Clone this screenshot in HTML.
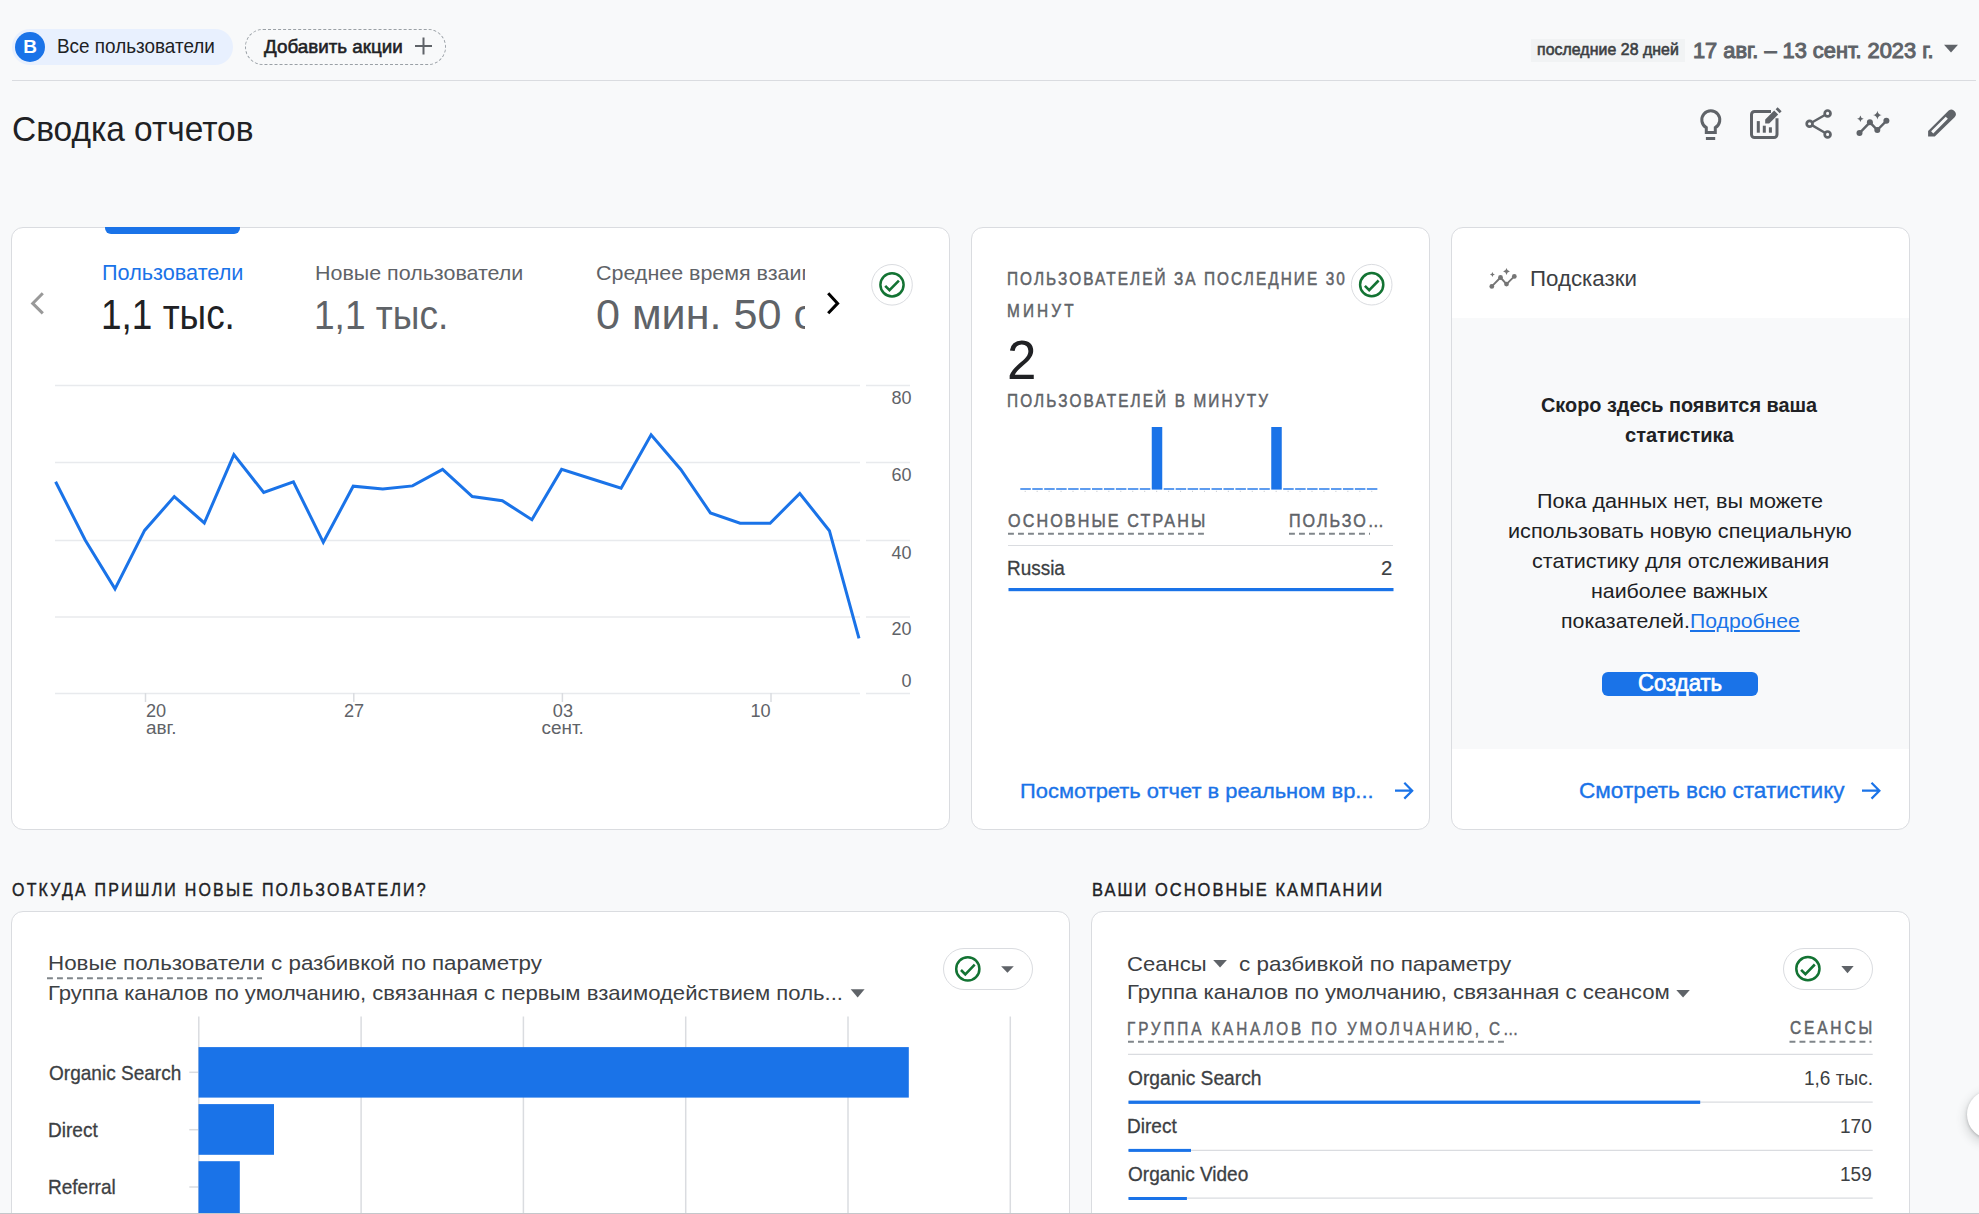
<!DOCTYPE html>
<html><head><meta charset="utf-8"><style>
html,body{margin:0;padding:0;}
body{width:1979px;height:1214px;overflow:hidden;background:#f8f9fa;position:relative;font-family:"Liberation Sans",sans-serif;}
.t{position:absolute;white-space:nowrap;line-height:normal;}
.b{position:absolute;box-sizing:border-box;}
svg{position:absolute;left:0;top:0;}
</style></head><body>
<div class="b" style="left:12px;top:29px;width:221px;height:36px;border-radius:18px;background:#e8f0fe"></div>
<div class="b" style="left:15px;top:31.8px;width:30px;height:30px;border-radius:15px;background:#1a73e8;color:#fff;font-weight:700;font-size:19px;line-height:30px;text-align:center;font-family:'Liberation Sans',sans-serif">B</div>
<div class="b" style="left:245px;top:29px;width:201px;height:36px;border-radius:18px;border:1.3px dashed #9aa0a6"></div>
<div class="b" style="left:1531px;top:38.5px;width:154px;height:23.5px;background:#f1f3f4"></div>
<div class="b" style="left:12px;top:80px;width:1964px;height:1px;background:#dadce0"></div>
<div class="b" style="left:11px;top:227px;width:939px;height:603px;border:1px solid #dadce0;border-radius:12px;background:#fff"></div>
<div class="b" style="left:104.8px;top:227px;width:135px;height:7px;background:#1a73e8;border-radius:0 0 6px 6px"></div>
<div class="b" style="left:971px;top:227px;width:459px;height:603px;border:1px solid #dadce0;border-radius:12px;background:#fff"></div>
<div class="b" style="left:1451px;top:227px;width:459px;height:603px;border:1px solid #dadce0;border-radius:12px;background:#fff;overflow:hidden"><div style="position:absolute;left:0;top:90px;width:100%;height:431px;background:#f8f9fa"></div></div>
<div class="b" style="left:1602px;top:671.8px;width:156.2px;height:24.2px;border-radius:6px;background:#1a73e8"></div>
<div class="b" style="left:11px;top:911px;width:1059px;height:400px;border:1px solid #dadce0;border-radius:12px;background:#fff"></div>
<div class="b" style="left:1091px;top:911px;width:819px;height:400px;border:1px solid #dadce0;border-radius:12px;background:#fff"></div>
<div class="b" style="left:1967px;top:1090px;width:49px;height:49px;border-radius:50%;background:#fff;box-shadow:0 1px 3px rgba(60,64,67,.3),0 4px 8px 3px rgba(60,64,67,.15)"></div>
<svg width="1979" height="1214" viewBox="0 0 1979 1214">
<line x1="55" y1="385.5" x2="860" y2="385.5" stroke="#e8eaed" stroke-width="1.5"/>
<line x1="866" y1="385.5" x2="910" y2="385.5" stroke="#e8eaed" stroke-width="1.5"/>
<line x1="55" y1="462.5" x2="860" y2="462.5" stroke="#e8eaed" stroke-width="1.5"/>
<line x1="866" y1="462.5" x2="910" y2="462.5" stroke="#e8eaed" stroke-width="1.5"/>
<line x1="55" y1="540.5" x2="860" y2="540.5" stroke="#e8eaed" stroke-width="1.5"/>
<line x1="866" y1="540.5" x2="910" y2="540.5" stroke="#e8eaed" stroke-width="1.5"/>
<line x1="55" y1="617" x2="860" y2="617" stroke="#e8eaed" stroke-width="1.5"/>
<line x1="866" y1="617" x2="910" y2="617" stroke="#e8eaed" stroke-width="1.5"/>
<line x1="55" y1="693.5" x2="860" y2="693.5" stroke="#e8eaed" stroke-width="1.5"/>
<line x1="866" y1="693.5" x2="910" y2="693.5" stroke="#e8eaed" stroke-width="1.5"/>
<line x1="145.5" y1="693" x2="145.5" y2="702" stroke="#dadce0" stroke-width="1.5"/>
<line x1="353.8" y1="693" x2="353.8" y2="702" stroke="#dadce0" stroke-width="1.5"/>
<line x1="562.4" y1="693" x2="562.4" y2="702" stroke="#dadce0" stroke-width="1.5"/>
<line x1="771" y1="693" x2="771" y2="702" stroke="#dadce0" stroke-width="1.5"/>
<polyline fill="none" stroke="#1a73e8" stroke-width="3" stroke-linejoin="miter" points="55.6,481.8 85.3,540.3 115,588.9 144.6,530.4 174.3,496.6 204.3,523 233.9,454.6 263.7,492.5 293.4,481.8 323.3,542.3 353.2,486.2 382.8,488.9 412.5,485.9 442.6,469.4 472.3,496.6 502.3,500.7 531.9,519.7 561.6,469.4 591.3,478.8 621.1,488.2 651.1,434.8 680.8,469.4 710.4,512.9 740.1,523.2 770.1,523.2 799.8,493.5 829.4,530.7 859,638.4"/>
<rect x="1020.30" y="488.3" width="10.5" height="1.4" fill="#1a73e8"/>
<rect x="1024.70" y="490.8" width="1" height="1" fill="#bdc1c6"/>
<rect x="1032.25" y="488.3" width="10.5" height="1.4" fill="#1a73e8"/>
<rect x="1036.65" y="490.8" width="1" height="1" fill="#bdc1c6"/>
<rect x="1044.20" y="488.3" width="10.5" height="1.4" fill="#1a73e8"/>
<rect x="1048.60" y="490.8" width="1" height="1" fill="#bdc1c6"/>
<rect x="1056.15" y="488.3" width="10.5" height="1.4" fill="#1a73e8"/>
<rect x="1060.55" y="490.8" width="1" height="1" fill="#bdc1c6"/>
<rect x="1068.10" y="488.3" width="10.5" height="1.4" fill="#1a73e8"/>
<rect x="1072.50" y="490.8" width="1" height="1" fill="#bdc1c6"/>
<rect x="1080.05" y="488.3" width="10.5" height="1.4" fill="#1a73e8"/>
<rect x="1084.45" y="490.8" width="1" height="1" fill="#bdc1c6"/>
<rect x="1092.00" y="488.3" width="10.5" height="1.4" fill="#1a73e8"/>
<rect x="1096.40" y="490.8" width="1" height="1" fill="#bdc1c6"/>
<rect x="1103.95" y="488.3" width="10.5" height="1.4" fill="#1a73e8"/>
<rect x="1108.35" y="490.8" width="1" height="1" fill="#bdc1c6"/>
<rect x="1115.90" y="488.3" width="10.5" height="1.4" fill="#1a73e8"/>
<rect x="1120.30" y="490.8" width="1" height="1" fill="#bdc1c6"/>
<rect x="1127.85" y="488.3" width="10.5" height="1.4" fill="#1a73e8"/>
<rect x="1132.25" y="490.8" width="1" height="1" fill="#bdc1c6"/>
<rect x="1139.80" y="488.3" width="10.5" height="1.4" fill="#1a73e8"/>
<rect x="1144.20" y="490.8" width="1" height="1" fill="#bdc1c6"/>
<rect x="1151.75" y="427" width="10.5" height="62.6" fill="#1a73e8"/>
<rect x="1156.15" y="490.8" width="1" height="1" fill="#bdc1c6"/>
<rect x="1163.70" y="488.3" width="10.5" height="1.4" fill="#1a73e8"/>
<rect x="1168.10" y="490.8" width="1" height="1" fill="#bdc1c6"/>
<rect x="1175.65" y="488.3" width="10.5" height="1.4" fill="#1a73e8"/>
<rect x="1180.05" y="490.8" width="1" height="1" fill="#bdc1c6"/>
<rect x="1187.60" y="488.3" width="10.5" height="1.4" fill="#1a73e8"/>
<rect x="1192.00" y="490.8" width="1" height="1" fill="#bdc1c6"/>
<rect x="1199.55" y="488.3" width="10.5" height="1.4" fill="#1a73e8"/>
<rect x="1203.95" y="490.8" width="1" height="1" fill="#bdc1c6"/>
<rect x="1211.50" y="488.3" width="10.5" height="1.4" fill="#1a73e8"/>
<rect x="1215.90" y="490.8" width="1" height="1" fill="#bdc1c6"/>
<rect x="1223.45" y="488.3" width="10.5" height="1.4" fill="#1a73e8"/>
<rect x="1227.85" y="490.8" width="1" height="1" fill="#bdc1c6"/>
<rect x="1235.40" y="488.3" width="10.5" height="1.4" fill="#1a73e8"/>
<rect x="1239.80" y="490.8" width="1" height="1" fill="#bdc1c6"/>
<rect x="1247.35" y="488.3" width="10.5" height="1.4" fill="#1a73e8"/>
<rect x="1251.75" y="490.8" width="1" height="1" fill="#bdc1c6"/>
<rect x="1259.30" y="488.3" width="10.5" height="1.4" fill="#1a73e8"/>
<rect x="1263.70" y="490.8" width="1" height="1" fill="#bdc1c6"/>
<rect x="1271.25" y="427" width="10.5" height="62.6" fill="#1a73e8"/>
<rect x="1275.65" y="490.8" width="1" height="1" fill="#bdc1c6"/>
<rect x="1283.20" y="488.3" width="10.5" height="1.4" fill="#1a73e8"/>
<rect x="1287.60" y="490.8" width="1" height="1" fill="#bdc1c6"/>
<rect x="1295.15" y="488.3" width="10.5" height="1.4" fill="#1a73e8"/>
<rect x="1299.55" y="490.8" width="1" height="1" fill="#bdc1c6"/>
<rect x="1307.10" y="488.3" width="10.5" height="1.4" fill="#1a73e8"/>
<rect x="1311.50" y="490.8" width="1" height="1" fill="#bdc1c6"/>
<rect x="1319.05" y="488.3" width="10.5" height="1.4" fill="#1a73e8"/>
<rect x="1323.45" y="490.8" width="1" height="1" fill="#bdc1c6"/>
<rect x="1331.00" y="488.3" width="10.5" height="1.4" fill="#1a73e8"/>
<rect x="1335.40" y="490.8" width="1" height="1" fill="#bdc1c6"/>
<rect x="1342.95" y="488.3" width="10.5" height="1.4" fill="#1a73e8"/>
<rect x="1347.35" y="490.8" width="1" height="1" fill="#bdc1c6"/>
<rect x="1354.90" y="488.3" width="10.5" height="1.4" fill="#1a73e8"/>
<rect x="1359.30" y="490.8" width="1" height="1" fill="#bdc1c6"/>
<rect x="1366.85" y="488.3" width="10.5" height="1.4" fill="#1a73e8"/>
<rect x="1371.25" y="490.8" width="1" height="1" fill="#bdc1c6"/>
<line x1="1008" y1="533.8" x2="1206" y2="533.8" stroke="#80868b" stroke-width="1.9" stroke-dasharray="5.9 4.1"/>
<line x1="1289" y1="533.8" x2="1370" y2="533.8" stroke="#80868b" stroke-width="1.9" stroke-dasharray="5.9 4.1"/>
<line x1="1008" y1="545.5" x2="1393" y2="545.5" stroke="#dadce0" stroke-width="1.2"/>
<rect x="1008.5" y="588" width="385" height="3.2" fill="#1a73e8"/>
<line x1="198.8" y1="1016.5" x2="198.8" y2="1214" stroke="#dadce0" stroke-width="1.5"/>
<line x1="361.1" y1="1016.5" x2="361.1" y2="1214" stroke="#dadce0" stroke-width="1.5"/>
<line x1="523.4" y1="1016.5" x2="523.4" y2="1214" stroke="#dadce0" stroke-width="1.5"/>
<line x1="685.7" y1="1016.5" x2="685.7" y2="1214" stroke="#dadce0" stroke-width="1.5"/>
<line x1="848.0" y1="1016.5" x2="848.0" y2="1214" stroke="#dadce0" stroke-width="1.5"/>
<line x1="1010.3" y1="1016.5" x2="1010.3" y2="1214" stroke="#dadce0" stroke-width="1.5"/>
<rect x="198.5" y="1047.1" width="710.3" height="50.5" fill="#1a73e8"/>
<rect x="198.5" y="1104.1" width="75.5" height="50.7" fill="#1a73e8"/>
<rect x="198.5" y="1161.2" width="41.3" height="60" fill="#1a73e8"/>
<line x1="189.3" y1="1072.3" x2="198" y2="1072.3" stroke="#dadce0" stroke-width="1.5"/>
<line x1="189.3" y1="1129.7" x2="198" y2="1129.7" stroke="#dadce0" stroke-width="1.5"/>
<line x1="189.3" y1="1187" x2="198" y2="1187" stroke="#dadce0" stroke-width="1.5"/>
<line x1="47" y1="978.3" x2="262" y2="978.3" stroke="#80868b" stroke-width="1.9" stroke-dasharray="5.9 4.1"/>
<line x1="1128" y1="1041.8" x2="1506" y2="1041.8" stroke="#80868b" stroke-width="1.9" stroke-dasharray="5.9 4.1"/>
<line x1="1789.5" y1="1041.8" x2="1871.5" y2="1041.8" stroke="#80868b" stroke-width="1.9" stroke-dasharray="5.9 4.1"/>
<line x1="1128" y1="1054.4" x2="1872.7" y2="1054.4" stroke="#dadce0" stroke-width="1.3"/>
<line x1="1128" y1="1102.2" x2="1872.7" y2="1102.2" stroke="#dadce0" stroke-width="1.3"/>
<line x1="1128" y1="1150.4" x2="1872.7" y2="1150.4" stroke="#dadce0" stroke-width="1.3"/>
<line x1="1128" y1="1198.1" x2="1872.7" y2="1198.1" stroke="#dadce0" stroke-width="1.3"/>
<rect x="1128.5" y="1100.6" width="571.7" height="3.3" fill="#1a73e8"/>
<rect x="1128.5" y="1148.9" width="62.5" height="3" fill="#1a73e8"/>
<rect x="1128.5" y="1197" width="58.4" height="3" fill="#1a73e8"/>
<path d="M1706.3,132.4 V127.6 A9,9 0 1 1 1715.3,127.6 V132.4 Z" fill="none" stroke="#5f6368" stroke-width="3" stroke-linejoin="miter"/>
<rect x="1705.9" y="137" width="9.3" height="3" fill="#5f6368"/>
<path d="M1771,111.5 H1754.5 a3,3 0 0 0 -3,3 V134.5 a3,3 0 0 0 3,3 H1774 a3,3 0 0 0 3,-3 V118.2" fill="none" stroke="#5f6368" stroke-width="3"/>
<rect x="1756.8" y="121.1" width="3" height="11.6" fill="#5f6368"/>
<rect x="1762.8" y="125.7" width="3" height="7" fill="#5f6368"/>
<rect x="1768.9" y="127.3" width="3" height="5.4" fill="#5f6368"/>
<path d="M1765.2,123.6 V119.6 L1774.2,110.6 L1778.2,114.6 L1769.2,123.6 Z" fill="#5f6368"/>
<path d="M1775.6,109.2 L1777.6,107.2 L1781.6,111.2 L1779.6,113.2 Z" fill="#5f6368"/>
<circle cx="1827.6" cy="113.4" r="2.9" fill="none" stroke="#5f6368" stroke-width="2.7"/>
<circle cx="1809.6" cy="123.8" r="2.9" fill="none" stroke="#5f6368" stroke-width="2.7"/>
<circle cx="1827.6" cy="134.4" r="2.9" fill="none" stroke="#5f6368" stroke-width="2.7"/>
<path d="M1812.3,122.2 L1824.9,115 M1812.3,125.4 L1824.9,132.8" stroke="#5f6368" stroke-width="2.4"/>
<polyline points="1859.5,133.1 1869.9,122.3 1877.3,130 1886.4,120.8" fill="none" stroke="#5f6368" stroke-width="2.4"/>
<circle cx="1859.5" cy="133.1" r="3" fill="#5f6368"/>
<circle cx="1869.9" cy="122.3" r="3" fill="#5f6368"/>
<circle cx="1877.3" cy="130" r="3" fill="#5f6368"/>
<circle cx="1886.4" cy="120.8" r="3" fill="#5f6368"/>
<path d="M1860.4,115.4 Q1860.862,118.238 1863.7,118.7 Q1860.862,119.162 1860.4,122.0 Q1859.938,119.162 1857.1000000000001,118.7 Q1859.938,118.238 1860.4,115.4 z" fill="#5f6368"/>
<path d="M1877.4,110.69999999999999 Q1878.016,114.484 1881.8000000000002,115.1 Q1878.016,115.716 1877.4,119.5 Q1876.784,115.716 1873.0,115.1 Q1876.784,114.484 1877.4,110.69999999999999 z" fill="#5f6368"/>
<path fill-rule="evenodd" d="M1928.1,136.6 V131 L1948.7,110.6 A4.45,4.45 0 0 1 1954.6,117.2 L1934.8,136.6 Z M1931.14,131.34 L1945.74,116.74 L1947.86,118.86 L1933.26,133.46 Z" fill="#5f6368"/>
<polyline points="1491.8,286.4 1500.5,277.5 1506.5,284.1 1514.3,276.4" fill="none" stroke="#757575" stroke-width="1.9"/>
<circle cx="1491.8" cy="286.4" r="2.4" fill="#757575"/>
<circle cx="1500.5" cy="277.5" r="2.4" fill="#757575"/>
<circle cx="1506.5" cy="284.1" r="2.4" fill="#757575"/>
<circle cx="1514.3" cy="276.4" r="2.4" fill="#757575"/>
<path d="M1492.4,271.9 Q1492.75,274.04999999999995 1494.9,274.4 Q1492.75,274.75 1492.4,276.9 Q1492.0500000000002,274.75 1489.9,274.4 Q1492.0500000000002,274.04999999999995 1492.4,271.9 z" fill="#757575"/>
<path d="M1506.5,268.1 Q1506.976,271.024 1509.9,271.5 Q1506.976,271.976 1506.5,274.9 Q1506.024,271.976 1503.1,271.5 Q1506.024,271.024 1506.5,268.1 z" fill="#757575"/>
<polyline points="42.8,293.2 32.7,303.4 42.8,313.4" fill="none" stroke="#999999" stroke-width="3"/>
<polyline points="828.2,293.3 837.6,303.4 828.2,313.3" fill="none" stroke="#000" stroke-width="3"/>
<circle cx="892" cy="284.8" r="20.3" fill="#fff" stroke="#dadce0" stroke-width="1"/>
<circle cx="892" cy="284.8" r="11.6" fill="none" stroke="#137333" stroke-width="2.5"/><polyline points="885.2,285.90000000000003 889.5,290.2 898.9,280.6" fill="none" stroke="#137333" stroke-width="2.6"/>
<circle cx="1371.7" cy="284.7" r="20.3" fill="#fff" stroke="#dadce0" stroke-width="1"/>
<circle cx="1371.7" cy="284.7" r="11.6" fill="none" stroke="#137333" stroke-width="2.5"/><polyline points="1364.9,285.8 1369.2,290.09999999999997 1378.6000000000001,280.5" fill="none" stroke="#137333" stroke-width="2.6"/>
<rect x="943.5" y="948.5" width="89" height="41" rx="20.5" fill="#fff" stroke="#dadce0" stroke-width="1"/>
<circle cx="967.8" cy="968.9" r="11.6" fill="none" stroke="#137333" stroke-width="2.5"/><polyline points="961.0,970.0 965.3,974.3 974.6999999999999,964.6999999999999" fill="none" stroke="#137333" stroke-width="2.6"/>
<path d="M1001.1,966.2 h12.7 l-6.35,6.6 z" fill="#5f6368"/>
<rect x="1783.5" y="948.5" width="89" height="41" rx="20.5" fill="#fff" stroke="#dadce0" stroke-width="1"/>
<circle cx="1807.9" cy="968.7" r="11.6" fill="none" stroke="#137333" stroke-width="2.5"/><polyline points="1801.1000000000001,969.8000000000001 1805.4,974.1 1814.8000000000002,964.5" fill="none" stroke="#137333" stroke-width="2.6"/>
<path d="M1841.3,966 h12.4 l-6.2,7.2 z" fill="#5f6368"/>
<path d="M850.7,989.2 h13.9 l-6.95,8.3 z" fill="#5f6368"/>
<path d="M1213.2,960 h13.7 l-6.85,7.6 z" fill="#5f6368"/>
<path d="M1676.3,990 h13.5 l-6.75,7.5 z" fill="#5f6368"/>
<path d="M1944,44.7 h14 l-7,7.7 z" fill="#5f6368"/>
<path d="M415,46 h17 M423.5,37.5 v17" stroke="#5f6368" stroke-width="2"/>
<path d="M1395,790.7 h16 M1404.3,782.8 l7.9,7.9 l-7.9,7.9" fill="none" stroke="#1a73e8" stroke-width="2.2"/>
<path d="M1862,790.7 h17 M1871.5,782.8 l7.9,7.9 l-7.9,7.9" fill="none" stroke="#1a73e8" stroke-width="2.2"/>
</svg>
<div class="t" style="top:35.34px;font-size:19.62px;color:#202124;left:56.54px;transform:scaleX(0.9642);transform-origin:0 0;">Все пользователи</div>
<div class="t" style="top:35.76px;font-size:18.6px;color:#202124;-webkit-text-stroke:0.55px #202124;left:263.70px;transform:scaleX(1.0106);transform-origin:0 0;">Добавить акции</div>
<div class="t" style="top:41.46px;font-size:15.84px;color:#3c4043;letter-spacing:0.076px;-webkit-text-stroke:0.6px #3c4043;left:1537.00px;">последние 28 дней</div>
<div class="t" style="top:38.99px;font-size:21.22px;color:#5f6368;-webkit-text-stroke:1.0px #5f6368;left:1693.47px;transform:scaleX(1.0271);transform-origin:0 0;">17 авг. – 13 сент. 2023 г.</div>
<div class="t" style="top:108.62px;font-size:34.88px;color:#202124;left:12.04px;transform:scaleX(0.9585);transform-origin:0 0;">Сводка отчетов</div>
<div class="t" style="top:260.53px;font-size:21.51px;color:#1a73e8;left:101.59px;transform:scaleX(1.0078);transform-origin:0 0;">Пользователи</div>
<div class="t" style="top:290.84px;font-size:42.15px;color:#202124;left:101.37px;transform:scaleX(0.8770);transform-origin:0 0;">1,1 тыс.</div>
<div class="t" style="top:261.22px;font-size:20.64px;color:#5f6368;left:314.76px;transform:scaleX(1.0398);transform-origin:0 0;">Новые пользователи</div>
<div class="t" style="top:290.89px;font-size:41.43px;color:#5f6368;left:314.31px;transform:scaleX(0.8952);transform-origin:0 0;">1,1 тыс.</div>
<div class="t" style="top:256.32px;left:595.00px;width:210.00px;height:28.9px;overflow:hidden"><div class="t" style="top:261.32px;font-size:20.64px;color:#5f6368;left:-0px;_l:595.96px;transform:scaleX(1.0398);transform-origin:0 0;;left:0.96px;top:5px">Среднее время взаимодействия</div></div>
<div class="t" style="top:285.84px;left:595.00px;width:210.00px;height:59.0px;overflow:hidden"><div class="t" style="top:290.84px;font-size:42.15px;color:#5f6368;left:-0px;_l:595.98px;transform:scaleX(1.0235);transform-origin:0 0;;left:0.98px;top:5px">0 мин. 50 сек.</div></div>
<div class="t" style="top:388.09px;font-size:18.02px;color:#5f6368;left:891.48px;">80</div>
<div class="t" style="top:464.89px;font-size:18.02px;color:#5f6368;left:891.48px;">60</div>
<div class="t" style="top:542.89px;font-size:18.02px;color:#5f6368;left:891.48px;">40</div>
<div class="t" style="top:618.89px;font-size:18.02px;color:#5f6368;left:891.48px;">20</div>
<div class="t" style="top:671.39px;font-size:18.02px;color:#5f6368;left:901.50px;">0</div>
<div class="t" style="top:700.55px;font-size:18.17px;color:#5f6368;left:146.00px;">20</div>
<div class="t" style="top:717.36px;font-size:18.93px;color:#5f6368;left:146.00px;">авг.</div>
<div class="t" style="top:700.55px;font-size:18.17px;color:#5f6368;left:344.00px;">27</div>
<div class="t" style="top:700.55px;font-size:18.17px;color:#5f6368;left:552.80px;">03</div>
<div class="t" style="top:717.36px;font-size:18.93px;color:#5f6368;left:541.50px;">сент.</div>
<div class="t" style="top:700.55px;font-size:18.17px;color:#5f6368;left:750.40px;">10</div>
<div class="t" style="top:268.51px;font-size:17.88px;color:#5f6368;letter-spacing:2.413px;-webkit-text-stroke:0.5px #5f6368;left:1007.34px;transform:scaleX(0.8600);transform-origin:0 0;">ПОЛЬЗОВАТЕЛЕЙ ЗА ПОСЛЕДНИЕ 30</div>
<div class="t" style="top:300.81px;font-size:17.88px;color:#5f6368;letter-spacing:3.639px;-webkit-text-stroke:0.5px #5f6368;left:1007.34px;transform:scaleX(0.8600);transform-origin:0 0;">МИНУТ</div>
<div class="t" style="top:328.00px;font-size:55.23px;color:#202124;left:1007.48px;transform:scaleX(0.9577);transform-origin:0 0;">2</div>
<div class="t" style="top:390.51px;font-size:17.88px;color:#5f6368;letter-spacing:2.474px;-webkit-text-stroke:0.5px #5f6368;left:1007.34px;transform:scaleX(0.8600);transform-origin:0 0;">ПОЛЬЗОВАТЕЛЕЙ В МИНУТУ</div>
<div class="t" style="top:509.93px;font-size:18.75px;color:#5f6368;letter-spacing:2.46px;-webkit-text-stroke:0.5px #5f6368;left:1008.30px;transform:scaleX(0.8600);transform-origin:0 0;">ОСНОВНЫЕ СТРАНЫ</div>
<div class="t" style="top:509.93px;font-size:18.75px;color:#5f6368;letter-spacing:2.288px;-webkit-text-stroke:0.5px #5f6368;left:1288.54px;transform:scaleX(0.8600);transform-origin:0 0;">ПОЛЬЗО…</div>
<div class="t" style="top:556.58px;font-size:20.35px;color:#3c4043;-webkit-text-stroke:0.3px #3c4043;left:1007.37px;transform:scaleX(0.9310);transform-origin:0 0;">Russia</div>
<div class="t" style="top:556.58px;font-size:20.35px;color:#3c4043;-webkit-text-stroke:0.2px #3c4043;left:1381.00px;">2</div>
<div class="t" style="top:779.12px;font-size:20.64px;color:#1a73e8;-webkit-text-stroke:0.35px #1a73e8;left:1019.74px;transform:scaleX(1.0623);transform-origin:0 0;">Посмотреть отчет в реальном вр...</div>
<div class="t" style="top:266.53px;font-size:21.51px;color:#3c4043;left:1529.56px;transform:scaleX(1.0367);transform-origin:0 0;">Подсказки</div>
<div class="t" style="top:393.68px;font-size:20.35px;color:#202124;font-weight:700;left:1541.40px;transform:scaleX(0.9765);transform-origin:0 0;">Скоро здесь появится ваша</div>
<div class="t" style="top:423.94px;font-size:20.06px;color:#202124;font-weight:700;left:1625.00px;">статистика</div>
<div class="t" style="top:489.02px;font-size:21.08px;color:#202124;left:1537.18px;transform:scaleX(1.0249);transform-origin:0 0;">Пока данных нет, вы можете</div>
<div class="t" style="top:520.34px;font-size:20.06px;color:#202124;left:1507.82px;transform:scaleX(1.0793);transform-origin:0 0;">использовать новую специальную</div>
<div class="t" style="top:550.14px;font-size:20.06px;color:#202124;left:1531.80px;transform:scaleX(1.0746);transform-origin:0 0;">статистику для отслеживания</div>
<div class="t" style="top:579.84px;font-size:20.06px;color:#202124;left:1591.33px;transform:scaleX(1.0660);transform-origin:0 0;">наиболее важных</div>
<div class="t" style="top:610.34px;font-size:20.06px;color:#202124;left:1560.74px;transform:scaleX(1.0648);transform-origin:0 0;">показателей.</div>
<div class="t" style="top:609.42px;font-size:21.08px;color:#1a73e8;text-decoration:underline;left:1690.00px;transform:scaleX(1.0047);transform-origin:0 0;">Подробнее</div>
<div class="t" style="top:670.34px;font-size:23.26px;color:#fff;-webkit-text-stroke:0.7px #fff;left:1637.75px;transform:scaleX(0.9525);transform-origin:0 0;">Создать</div>
<div class="t" style="top:778.17px;font-size:21.8px;color:#1a73e8;-webkit-text-stroke:0.35px #1a73e8;left:1579.26px;transform:scaleX(1.0373);transform-origin:0 0;">Смотреть всю статистику</div>
<div class="t" style="top:879.75px;font-size:18.17px;color:#202124;letter-spacing:2.518px;-webkit-text-stroke:0.4px #202124;left:12.20px;transform:scaleX(0.8800);transform-origin:0 0;">ОТКУДА ПРИШЛИ НОВЫЕ ПОЛЬЗОВАТЕЛИ?</div>
<div class="t" style="top:878.83px;font-size:18.75px;color:#202124;letter-spacing:2.255px;-webkit-text-stroke:0.4px #202124;left:1092.12px;transform:scaleX(0.8800);transform-origin:0 0;">ВАШИ ОСНОВНЫЕ КАМПАНИИ</div>
<div class="t" style="top:950.62px;font-size:21.08px;color:#3c4043;left:47.74px;transform:scaleX(1.0595);transform-origin:0 0;">Новые пользователи с разбивкой по параметру</div>
<div class="t" style="top:980.72px;font-size:20.64px;color:#3c4043;left:47.93px;transform:scaleX(1.0715);transform-origin:0 0;">Группа каналов по умолчанию, связанная с первым взаимодействием поль...</div>
<div class="t" style="top:1061.32px;font-size:20.64px;color:#3c4043;-webkit-text-stroke:0.3px #3c4043;left:48.70px;transform:scaleX(0.9228);transform-origin:0 0;">Organic Search</div>
<div class="t" style="top:1118.12px;font-size:20.64px;color:#3c4043;-webkit-text-stroke:0.3px #3c4043;left:47.78px;transform:scaleX(0.9228);transform-origin:0 0;">Direct</div>
<div class="t" style="top:1175.22px;font-size:20.64px;color:#3c4043;-webkit-text-stroke:0.3px #3c4043;left:47.78px;transform:scaleX(0.9228);transform-origin:0 0;">Referral</div>
<div class="t" style="top:951.85px;font-size:20.49px;color:#3c4043;left:1127.22px;transform:scaleX(1.0772);transform-origin:0 0;">Сеансы</div>
<div class="t" style="top:951.85px;font-size:20.49px;color:#3c4043;left:1239.00px;transform:scaleX(1.0955);transform-origin:0 0;">с разбивкой по параметру</div>
<div class="t" style="top:981.28px;font-size:20.35px;color:#3c4043;left:1127.21px;transform:scaleX(1.0925);transform-origin:0 0;">Группа каналов по умолчанию, связанная с сеансом</div>
<div class="t" style="top:1018.69px;font-size:18.02px;color:#5f6368;letter-spacing:3.35px;-webkit-text-stroke:0.4px #5f6368;left:1127.45px;transform:scaleX(0.8500);transform-origin:0 0;">ГРУППА КАНАЛОВ ПО УМОЛЧАНИЮ, С…</div>
<div class="t" style="top:1018.49px;font-size:18.02px;color:#5f6368;letter-spacing:3.294px;-webkit-text-stroke:0.5px #5f6368;left:1789.80px;transform:scaleX(0.8600);transform-origin:0 0;">СЕАНСЫ</div>
<div class="t" style="top:1066.78px;font-size:20.35px;color:#3c4043;-webkit-text-stroke:0.3px #3c4043;left:1128.00px;transform:scaleX(0.9441);transform-origin:0 0;">Organic Search</div>
<div class="t" style="top:1065.82px;font-size:20.64px;color:#3c4043;left:1804.15px;transform:scaleX(0.9228);transform-origin:0 0;">1,6 тыс.</div>
<div class="t" style="top:1114.12px;font-size:20.64px;color:#3c4043;-webkit-text-stroke:0.3px #3c4043;left:1127.08px;transform:scaleX(0.9228);transform-origin:0 0;">Direct</div>
<div class="t" style="top:1114.32px;font-size:20.64px;color:#3c4043;left:1840.18px;transform:scaleX(0.9228);transform-origin:0 0;">170</div>
<div class="t" style="top:1161.72px;font-size:20.64px;color:#3c4043;-webkit-text-stroke:0.3px #3c4043;left:1128.00px;transform:scaleX(0.9228);transform-origin:0 0;">Organic Video</div>
<div class="t" style="top:1162.42px;font-size:20.64px;color:#3c4043;left:1840.18px;transform:scaleX(0.9228);transform-origin:0 0;">159</div>
<div class="b" style="left:0;top:1212.5px;width:1979px;height:1.5px;background:#c4c7cb"></div>
</body></html>
